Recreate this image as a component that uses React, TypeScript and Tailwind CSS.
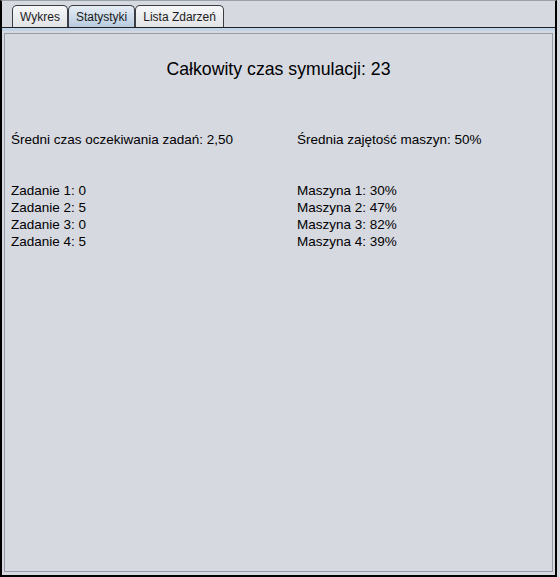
import React from "react";

const TABS = ["Wykres", "Statystyki", "Lista Zdarzeń"];
const SELECTED = 1;

const JOBS = [0, 5, 0, 5];
const MACHINES = [30, 47, 82, 39];

function Tab({ label, selected }: { label: string; selected: boolean }) {
  return (
    <div
      className={`h-[22px] px-[7px] flex items-center border border-b-0 border-[#3a3d44] rounded-t-[5px] text-[12px] text-[#1c1c1c] leading-none ${
        selected
          ? "bg-gradient-to-b from-[#e6edf5] to-[#b7cbdf]"
          : "bg-gradient-to-b from-[#f6f7f8] to-[#e1e3e6]"
      }`}
    >
      {label}
    </div>
  );
}

export default function App() {
  return (
    <div
      className="w-[560px] h-[577px] bg-[#d6d9e0] text-black"
      style={{ fontFamily: "'Liberation Sans', Arial, sans-serif" }}
    >
      <div className="w-[557px] h-[577px] flex flex-col border-l-2 border-r-2 border-b-2 border-t border-t-[#9aa0a8] border-l-black border-r-black border-b-black">
        {/* tab strip */}
        <div className="h-[26px] flex items-end pl-[10px]">
          {TABS.map((t, i) => (
            <Tab key={t} label={t} selected={i === SELECTED} />
          ))}
        </div>
        <div className="h-[1px] bg-[#1e2026]" />
        <div className="h-[3px] bg-[#c2d3e5]" />
        <div className="flex-1 pt-[2px] px-[2px] pb-[3px]">
          <div className="h-full border border-[#979ca5] flex flex-col">
            <div className="mt-[23px] text-center text-[17.7px] leading-[24px]">
              Całkowity czas symulacji: 23
            </div>
            <div className="mt-[50px] pl-[6px] grid grid-cols-[286px_1fr] text-[13.5px] leading-[17px]">
              <div>Średni czas oczekiwania zadań: 2,50</div>
              <div>Średnia zajętość maszyn: 50%</div>
              <div className="mt-[34px] flex flex-col">
                {JOBS.map((v, i) => (
                  <div key={i}>
                    Zadanie {i + 1}: {v}
                  </div>
                ))}
              </div>
              <div className="mt-[34px] flex flex-col">
                {MACHINES.map((v, i) => (
                  <div key={i}>
                    Maszyna {i + 1}: {v}%
                  </div>
                ))}
              </div>
            </div>
          </div>
        </div>
      </div>
    </div>
  );
}
